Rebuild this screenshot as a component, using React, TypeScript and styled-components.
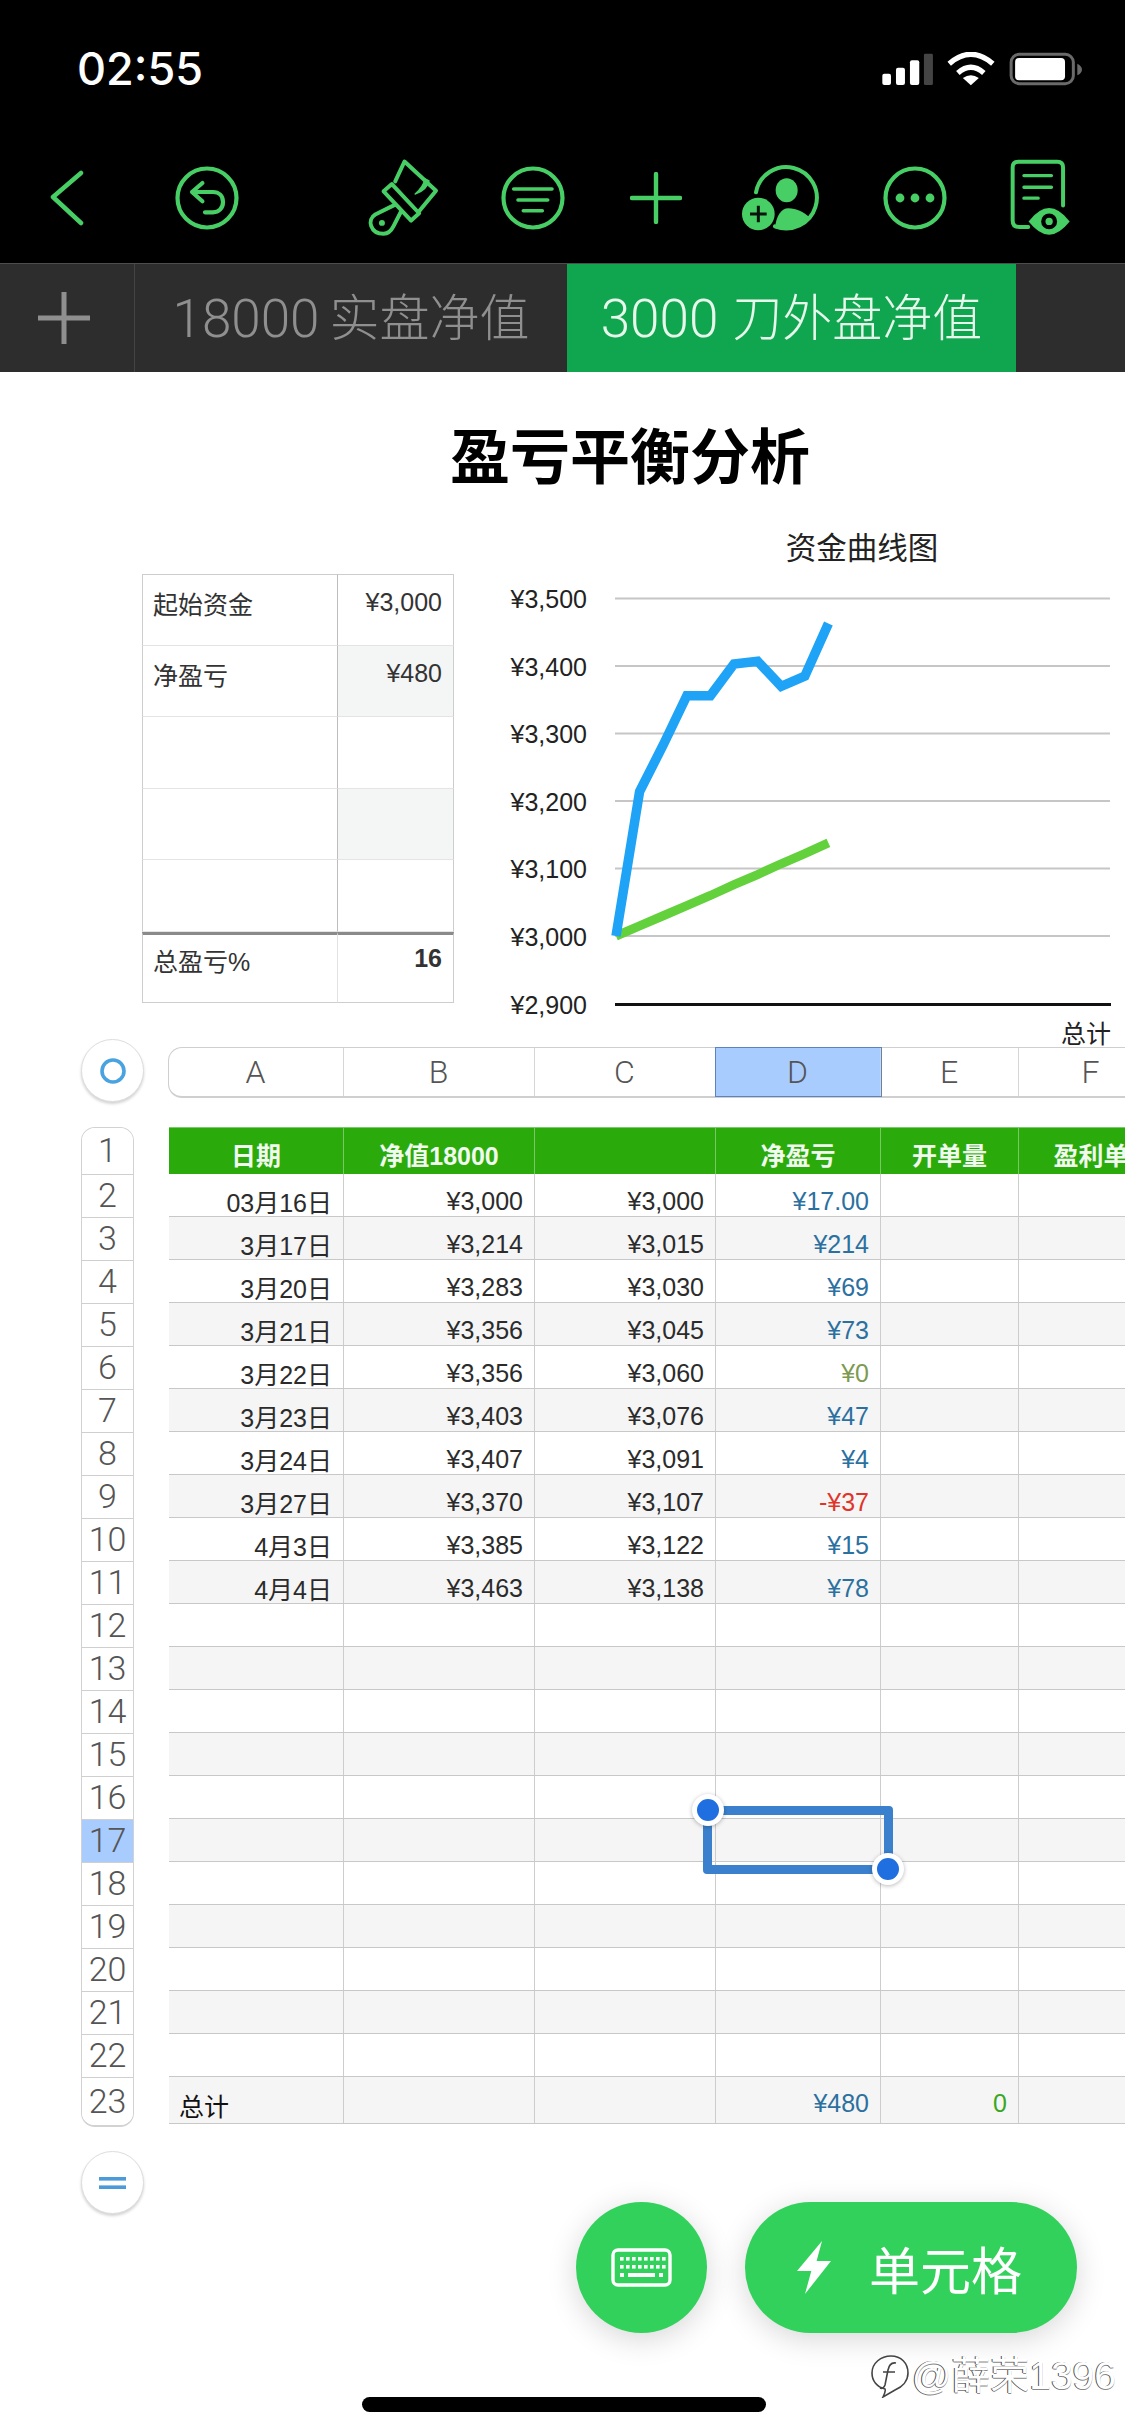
import { FC } from 'react';
import styled, { createGlobalStyle } from 'styled-components';

const SANS = `"Liberation Sans", "Noto Sans CJK SC", sans-serif`;
const LIGHT = `Roboto, "Noto Sans CJK SC", sans-serif`;
const GREEN = '#47cf66';

const COLUMNS = [
	{ name: 'A', width: 175 },
	{ name: 'B', width: 191 },
	{ name: 'C', width: 181 },
	{ name: 'D', width: 165 },
	{ name: 'E', width: 138 },
	{ name: 'F', width: 145 },
];
const TRACKS = COLUMNS.map((c) => `${c.width}px`).join(' ');

type Tone = 'plain' | 'blue' | 'olive' | 'red' | 'green' | 'black';

const ROWS: { date: string; net: string; base: string; pnl: string; tone: Tone }[] = [
	{ date: '03月16日', net: '¥3,000', base: '¥3,000', pnl: '¥17.00', tone: 'blue' },
	{ date: '3月17日', net: '¥3,214', base: '¥3,015', pnl: '¥214', tone: 'blue' },
	{ date: '3月20日', net: '¥3,283', base: '¥3,030', pnl: '¥69', tone: 'blue' },
	{ date: '3月21日', net: '¥3,356', base: '¥3,045', pnl: '¥73', tone: 'blue' },
	{ date: '3月22日', net: '¥3,356', base: '¥3,060', pnl: '¥0', tone: 'olive' },
	{ date: '3月23日', net: '¥3,403', base: '¥3,076', pnl: '¥47', tone: 'blue' },
	{ date: '3月24日', net: '¥3,407', base: '¥3,091', pnl: '¥4', tone: 'blue' },
	{ date: '3月27日', net: '¥3,370', base: '¥3,107', pnl: '-¥37', tone: 'red' },
	{ date: '4月3日', net: '¥3,385', base: '¥3,122', pnl: '¥15', tone: 'blue' },
	{ date: '4月4日', net: '¥3,463', base: '¥3,138', pnl: '¥78', tone: 'blue' },
];

const TONES: Record<Tone, string> = {
	plain: '#2b2b2b',
	blue: '#2c709f',
	olive: '#7d9a52',
	red: '#e0342a',
	green: '#3aa81e',
	black: '#111',
};

const GlobalStyle = createGlobalStyle`
	html, body {
		margin: 0;
		padding: 0;
		background: #fff;
	}
`;

const Page = styled.div`
	position: relative;
	width: 1125px;
	height: 2436px;
	overflow: hidden;
	background: #fff;
	font-family: ${SANS};
`;

const StatusBar = styled.div`
	display: flex;
	justify-content: space-between;
	align-items: flex-start;
	box-sizing: border-box;
	height: 130px;
	padding: 52px 42px 0 77px;
	background: #000;
`;

const Clock = styled.span`
	font-family: Inter, sans-serif;
	font-weight: 500;
	font-size: 45px;
	line-height: 33px;
	color: #fff;
`;

const Toolbar = styled.div`
	display: flex;
	align-items: center;
	box-sizing: border-box;
	height: 133px;
	padding: 3px 0 0 50px;
	background: #000;
`;

const ToolIcon = styled.svg<{ $gap?: number }>`
	display: block;
	flex: none;
	margin-left: ${(p) => p.$gap ?? 0}px;
	fill: none;
	stroke: ${GREEN};
	stroke-linecap: round;
	stroke-linejoin: round;
`;

const TabBar = styled.div`
	display: flex;
	height: 109px;
	box-sizing: border-box;
	border-top: 1px solid #4d4d4d;
	background: #2d2d2e;
`;

const AddSheet = styled.div`
	display: flex;
	align-items: center;
	justify-content: center;
	width: 135px;
	box-sizing: border-box;
	padding: 0 6px 0 0;
	border-right: 1px solid #434343;
`;

const SheetTab = styled.div<{ $active?: boolean }>`
	display: flex;
	align-items: center;
	justify-content: center;
	gap: ${(p) => (p.$active ? 14 : 10)}px;
	width: ${(p) => (p.$active ? 449 : 432)}px;
	padding-top: 2px;
	box-sizing: border-box;
	background: ${(p) => (p.$active ? '#10a64f' : 'transparent')};
	color: ${(p) => (p.$active ? '#e8f7ec' : '#8f8f8f')};
	font-family: ${LIGHT};
	font-weight: 300;
	font-size: 50px;
	line-height: 60px;
`;

const TabNumber = styled.span`
	font-size: 53px;
`;

const Title = styled.h1`
	margin: 0;
	padding: 57px 0 0 135px;
	text-align: center;
	font-family: ${SANS};
	font-weight: 700;
	font-size: 60px;
	line-height: 60px;
	color: #000;
`;

const Dashboard = styled.section`
	display: flex;
	align-items: flex-start;
	height: 514px;
	margin-top: 36px;
	padding-left: 142px;
`;

const MiniTable = styled.div`
	display: grid;
	grid-template-columns: 196px 116px;
	grid-auto-rows: 71.5px;
	flex: none;
	margin-top: 49px;
`;

const MiniLabel = styled.div<{ $total?: boolean }>`
	box-sizing: border-box;
	padding: ${(p) => (p.$total ? 12 : 15)}px 10px 0;
	font-size: 25px;
	line-height: 30px;
	color: #333;
	border-left: 1.5px solid #cdcdcd;
	border-right: 1.5px solid ${(p) => (p.$total ? '#e2e2e2' : '#bdbdbd')};
	border-bottom: 1.5px solid ${(p) => (p.$total ? '#cdcdcd' : '#e4e4e4')};
	border-top: ${(p) => (p.$total ? '3px solid #8a8a8a' : 'none')};

	&:first-child {
		border-top: 1.5px solid #cdcdcd;
	}
`;

const MiniValue = styled.div<{ $shaded?: boolean; $total?: boolean; $first?: boolean }>`
	box-sizing: border-box;
	padding: ${(p) => (p.$total ? 8 : 12)}px 11px 0 0;
	text-align: right;
	font-size: 25px;
	line-height: 30px;
	font-weight: ${(p) => (p.$total ? 700 : 400)};
	color: #333;
	background: ${(p) => (p.$shaded ? '#f4f5f5' : 'transparent')};
	border-right: 1.5px solid #cdcdcd;
	border-bottom: 1.5px solid ${(p) => (p.$total ? '#cdcdcd' : '#e4e4e4')};
	border-top: ${(p) => (p.$total ? '3px solid #8a8a8a' : p.$first ? '1.5px solid #cdcdcd' : 'none')};
`;

const Chart = styled.svg`
	display: block;
	flex: none;
	margin-left: 46px;
	overflow: visible;
	font-family: ${SANS};
`;

const Strip = styled.div`
	display: flex;
	align-items: flex-start;
	height: 63px;
	padding-left: 81px;
`;

const RoundButton = styled.div`
	display: flex;
	align-items: center;
	justify-content: center;
	flex: none;
	width: 63px;
	height: 63px;
	box-sizing: border-box;
	border: 1px solid #dedede;
	border-radius: 50%;
	background: #fff;
	box-shadow: 0 2px 3px rgba(0, 0, 0, 0.18);
`;

const ColumnBar = styled.div`
	display: grid;
	grid-template-columns: ${TRACKS};
	flex: none;
	height: 51px;
	margin: 8px 0 0 23.5px;
	box-sizing: border-box;
	border: 1.5px solid #cfcfcf;
	border-right: none;
	border-bottom-width: 2px;
	border-radius: 14px 0 0 14px;
`;

const ColumnHead = styled.div<{ $selected?: boolean }>`
	display: flex;
	align-items: center;
	justify-content: center;
	box-sizing: border-box;
	border-right: 1px solid #d6d6d6;
	font-family: ${LIGHT};
	font-weight: 300;
	font-size: 32px;
	color: #555;
	background: ${(p) => (p.$selected ? '#a9ccff' : 'transparent')};
	outline: ${(p) => (p.$selected ? '1.5px solid #5b83bd' : 'none')};
`;

const SheetArea = styled.div`
	display: flex;
	align-items: flex-start;
	gap: 35px;
	margin-top: 25px;
	padding-left: 81px;
`;

const RowNumbers = styled.div`
	flex: none;
	width: 53px;
	box-sizing: border-box;
	border: 1.5px solid #d2d2d2;
	border-bottom-width: 2px;
	border-radius: 14px;
	overflow: hidden;
`;

const RowNumber = styled.div<{ $tall?: boolean; $selected?: boolean }>`
	display: flex;
	align-items: center;
	justify-content: center;
	height: ${(p) => (p.$tall ? 47 : 43)}px;
	box-sizing: border-box;
	padding-bottom: 2px;
	border-bottom: 1px solid #cfcfcf;
	font-family: ${LIGHT};
	font-weight: 300;
	font-size: 34px;
	color: #555;
	background: ${(p) => (p.$selected ? '#a9ccff' : '#fff')};

	&:last-child {
		border-bottom: none;
	}
`;

const TableBody = styled.div`
	position: relative;
	flex: none;
`;

const HeaderRow = styled.div`
	display: grid;
	grid-template-columns: ${TRACKS};
	height: 47px;
	border-top: 1px solid #7acb66;
	box-sizing: border-box;
	background: #2bab0b;
`;

const HeaderCell = styled.div`
	display: flex;
	align-items: flex-end;
	justify-content: center;
	box-sizing: border-box;
	padding-bottom: 3px;
	border-right: 1px solid #78c964;
	font-weight: 700;
	font-size: 25px;
	line-height: 30px;
	color: #f1faee;
`;

const DataRow = styled.div<{ $shaded?: boolean; $tall?: boolean }>`
	display: grid;
	grid-template-columns: ${TRACKS};
	height: ${(p) => (p.$tall ? 47 : 43)}px;
	box-sizing: border-box;
	border-bottom: 1.5px solid #c8c8c8;
	background: ${(p) => (p.$shaded ? '#f5f5f5' : '#fff')};
`;

const Cell = styled.div<{ $tone?: Tone; $left?: boolean; $date?: boolean; $lift?: number }>`
	display: flex;
	align-items: flex-end;
	justify-content: ${(p) => (p.$left ? 'flex-start' : 'flex-end')};
	box-sizing: border-box;
	padding: 0 11px ${(p) => p.$lift ?? 0}px 10px;
	border-right: 1px solid #cdcdcd;
	font-size: 25px;
	line-height: ${(p) => (p.$date ? 25 : 30)}px;
	color: ${(p) => TONES[p.$tone ?? 'plain']};
`;

const Selection = styled.div`
	position: absolute;
	left: 534px;
	top: 679px;
	width: 190px;
	height: 68px;
	box-sizing: border-box;
	border: 9px solid #3a80cc;
	border-radius: 4px;
`;

const Handle = styled.div<{ $end?: boolean }>`
	position: absolute;
	${(p) => (p.$end ? 'right: -20px; bottom: -20px;' : 'left: -20px; top: -21px;')}
	width: 32px;
	height: 32px;
	box-sizing: border-box;
	border: 5.5px solid #fff;
	border-radius: 50%;
	background: #1f6fe0;
	box-shadow: 0 1px 4px rgba(0, 0, 0, 0.28);
`;

const FormulaButton = styled(RoundButton)`
	margin: 24px 0 0 81px;
`;

const FloatingActions = styled.div`
	position: absolute;
	right: 48px;
	bottom: 103px;
	display: flex;
	gap: 38px;
`;

const KeyboardButton = styled.div`
	display: flex;
	align-items: center;
	justify-content: center;
	width: 131px;
	height: 131px;
	border-radius: 50%;
	background: #32d15c;
	box-shadow: 0 6px 30px rgba(0, 0, 0, 0.16);
`;

const CellButton = styled.div`
	display: flex;
	align-items: center;
	gap: 38px;
	width: 332px;
	height: 131px;
	box-sizing: border-box;
	padding-left: 52px;
	border-radius: 66px;
	background: #32d15c;
	box-shadow: 0 6px 30px rgba(0, 0, 0, 0.16);
	color: #fff;
	font-family: "Noto Sans CJK SC", sans-serif;
	font-size: 51px;
	line-height: 60px;
`;

const Watermark = styled.div`
	position: absolute;
	right: 9px;
	bottom: 38px;
	display: flex;
	align-items: center;
	gap: 3px;
	color: #fff;
	font-size: 39px;
	line-height: 44px;
	text-shadow: -1px 0 0 #4a4a4a, 0 1px 0 #8a8a8a;
`;

const HomeBar = styled.div`
	position: absolute;
	left: 362px;
	bottom: 24px;
	width: 404px;
	height: 15px;
	border-radius: 8px;
	background: #000;
`;

const StatusIcons: FC = () => (
	<svg width={203} height={34} viewBox="60 35 610 102" style={{ display: 'block' }}>
		<g fill="#fff">
			<rect x={67} y={100} width={26} height={34} rx={6} />
			<rect x={108} y={82} width={27} height={52} rx={6} />
			<rect x={150} y={60} width={28} height={74} rx={6} />
		</g>
		<rect x={192} y={40} width={27} height={94} rx={4} fill="#444" />
		<g fill="none" stroke="#fff" strokeWidth={16}>
			<path d="M268 70Q333 14 399 70" />
			<path d="M294 98Q333 64 372 98" />
		</g>
		<path d="M333 135L309 113Q333 96 357 113Z" fill="#fff" />
		<rect x={454} y={42} width={187} height={88} rx={24} fill="none" stroke="#6a6a6a" strokeWidth={9} />
		<rect x={466} y={53} width={150} height={67} rx={12} fill="#fff" />
		<path d="M653 70Q667 78 667 88Q667 98 653 105Z" fill="#6a6a6a" />
	</svg>
);

const Tools: FC = () => (
	<Toolbar>
		<ToolIcon width={35} height={60} viewBox="50 168 35 60" strokeWidth={4.5}>
			<path d="M81 173L53 197L81 223" />
		</ToolIcon>
		<ToolIcon $gap={90} width={64} height={64} viewBox="0 0 64 64" strokeWidth={4.2}>
			<circle cx={32} cy={32} r={29.5} />
			<path d="M27.4 17L17 26L27.4 35.3M17 26H38C44 26 48 30 48 36C48 42 44 46.3 38 46.3H30" />
		</ToolIcon>
		<ToolIcon $gap={128} width={73} height={80} viewBox="75 30 220 240" strokeWidth={12}>
			<path d="M150 108L125 130L208 218L232 196Z" />
			<path d="M160 100L188 40L283 128L232 190" />
			<path d="M262 98Q256 126 220 138Q244 118 250 92Z" fill={GREEN} strokeWidth={4} />
			<path d="M160 170L100 200C74 215 85 258 125 258C140 258 150 245 155 235L178 190" />
			<circle cx={120} cy={225} r={9} fill={GREEN} stroke="none" />
		</ToolIcon>
		<ToolIcon $gap={61} width={64} height={64} viewBox="0 0 64 64" strokeWidth={4.2}>
			<circle cx={32} cy={32} r={29.5} />
			<path d="M12.7 23H51M17 34H46.7M22.3 44.7H41.3" strokeWidth={3.6} />
		</ToolIcon>
		<ToolIcon $gap={65} width={52} height={52} viewBox="0 0 52 52" strokeWidth={4.4}>
			<path d="M26 2V50M2 26H50" />
		</ToolIcon>
		<ToolIcon $gap={58} width={80} height={68} viewBox="60 45 240 204" strokeWidth={12}>
			<path d="M108 130A92 92 0 1 1 165 232" />
			<ellipse cx={200} cy={124} rx={33} ry={36} fill={GREEN} stroke="none" />
			<path d="M165 238C168 200 185 178 205 178C230 178 250 190 268 204C245 228 210 244 165 238Z" fill={GREEN} stroke="none" />
			<circle cx={115} cy={195} r={49} fill={GREEN} stroke="none" />
			<path d="M115 170V220M90 195H140" stroke="#08130a" strokeWidth={9} strokeLinecap="butt" />
		</ToolIcon>
		<ToolIcon $gap={63} width={64} height={64} viewBox="0 0 64 64" strokeWidth={4.2}>
			<circle cx={32} cy={32} r={29.5} />
			<g fill={GREEN} stroke="none">
				<circle cx={17} cy={32} r={4.4} />
				<circle cx={32} cy={32} r={4.4} />
				<circle cx={47} cy={32} r={4.4} />
			</g>
		</ToolIcon>
		<ToolIcon $gap={63} width={63} height={78} viewBox="870 30 190 235" strokeWidth={12}>
			<path d="M1030 170V55Q1030 38 1013 38H895Q878 38 878 55V215Q878 235 898 235H925" />
			<path d="M912 80H995M912 115H995M912 148H955" strokeWidth={10} />
			<path d="M926 218Q958 178 988 178Q1018 178 1050 218Q1018 258 988 258Q958 258 926 218Z" fill={GREEN} stroke="none" />
			<circle cx={988} cy={218} r={24} fill="#000" stroke="none" />
			<circle cx={988} cy={218} r={11} fill={GREEN} stroke="none" />
		</ToolIcon>
	</Toolbar>
);

const Tabs: FC = () => (
	<TabBar>
		<AddSheet>
			<svg width={52} height={52} viewBox="0 0 52 52" fill="none" stroke="#8f8f8f" strokeWidth={5}>
				<path d="M26 0V52M0 26H52" />
			</svg>
		</AddSheet>
		<SheetTab>
			<TabNumber>18000</TabNumber>
			<span>实盘净值</span>
		</SheetTab>
		<SheetTab $active>
			<TabNumber>3000</TabNumber>
			<span>刀外盘净值</span>
		</SheetTab>
	</TabBar>
);

const VALUES = [3000, 3214, 3283, 3356, 3356, 3403, 3407, 3370, 3385, 3463];
const BASELINE = [3000, 3015, 3030, 3045, 3060, 3076, 3091, 3107, 3122, 3138];
const LABELS = ['¥3,500', '¥3,400', '¥3,300', '¥3,200', '¥3,100', '¥3,000'];

const polyline = (series: number[]) =>
	series.map((v, i) => `${616 + i * 23.6},${936 - (v - 3000) * 0.675}`).join(' ');

const CurveChart: FC = () => (
	<Chart width={625} height={522} viewBox="500 525 625 522">
		<text x={862} y={559} textAnchor="middle" fontSize={30.5} fill="#222" fontFamily={SANS}>
			资金曲线图
		</text>
		{LABELS.map((label, i) => {
			const y = 598.5 + i * 67.5;
			return (
				<g key={label}>
					<line x1={615} x2={1110} y1={y} y2={y} stroke="#c6c6c6" strokeWidth={2} />
					<text x={587} y={y + 9.5} textAnchor="end" fontSize={25} fill="#222">
						{label}
					</text>
				</g>
			);
		})}
		<line x1={615} x2={1111} y1={1004.5} y2={1004.5} stroke="#111" strokeWidth={3} />
		<text x={587} y={1014} textAnchor="end" fontSize={25} fill="#222">
			¥2,900
		</text>
		<text x={1111} y={1043} textAnchor="end" fontSize={25} fill="#222" fontFamily={SANS}>
			总计
		</text>
		<polyline points={polyline(BASELINE)} fill="none" stroke="#62d13c" strokeWidth={9} />
		<polyline points={polyline(VALUES)} fill="none" stroke="#1ea3f6" strokeWidth={9.5} />
	</Chart>
);

const Sheet: FC = () => {
	const numbers = Array.from({ length: 23 }, (_, i) => i + 1);

	return (
		<>
			<Strip>
				<RoundButton>
					<svg width={26} height={26} viewBox="0 0 26 26" fill="none" stroke="#4aa3e0" strokeWidth={3.6}>
						<circle cx={13} cy={13} r={11} />
					</svg>
				</RoundButton>
				<ColumnBar>
					{COLUMNS.map((c) => (
						<ColumnHead key={c.name} $selected={c.name === 'D'}>
							{c.name}
						</ColumnHead>
					))}
				</ColumnBar>
			</Strip>
			<SheetArea>
				<RowNumbers>
					{numbers.map((n) => (
						<RowNumber key={n} $tall={n === 1 || n === 23} $selected={n === 17}>
							{n}
						</RowNumber>
					))}
				</RowNumbers>
				<TableBody>
					<HeaderRow>
						<HeaderCell>日期</HeaderCell>
						<HeaderCell>净值18000</HeaderCell>
						<HeaderCell />
						<HeaderCell>净盈亏</HeaderCell>
						<HeaderCell>开单量</HeaderCell>
						<HeaderCell>盈利单</HeaderCell>
					</HeaderRow>
					{numbers.slice(1, 22).map((n) => {
						const row = ROWS[n - 2];
						return (
							<DataRow key={n} $shaded={n % 2 === 1}>
								<Cell $date>{row?.date}</Cell>
								<Cell>{row?.net}</Cell>
								<Cell>{row?.base}</Cell>
								<Cell $tone={row?.tone}>{row?.pnl}</Cell>
								<Cell />
								<Cell />
							</DataRow>
						);
					})}
					<DataRow $shaded $tall>
						<Cell $left $tone="black" $lift={1}>
							总计
						</Cell>
						<Cell />
						<Cell />
						<Cell $tone="blue" $lift={5}>
							¥480
						</Cell>
						<Cell $tone="green" $lift={5}>
							0
						</Cell>
						<Cell />
					</DataRow>
					<Selection>
						<Handle />
						<Handle $end />
					</Selection>
				</TableBody>
			</SheetArea>
			<FormulaButton>
				<svg width={27} height={12} viewBox="0 0 27 12" fill="#4a9bd8">
					<rect width={27} height={3.6} y={0} />
					<rect width={27} height={3.6} y={8.4} />
				</svg>
			</FormulaButton>
		</>
	);
};

const KEY_ROWS = [12, 20];

const KeyboardIcon: FC = () => (
	<svg width={61} height={39} viewBox="0 0 61 39">
		<rect x={2} y={2} width={57} height={35} rx={5} fill="none" stroke="#fff" strokeWidth={3.4} />
		<g fill="#fff">
			{KEY_ROWS.map((y) =>
				[9, 15, 21, 27, 33, 39, 45, 51].map((x) => <rect key={`${x}-${y}`} x={x} y={y - 3} width={3.6} height={3.6} />),
			)}
			<rect x={9} y={25} width={4} height={4} />
			<rect x={17} y={25} width={27} height={4} />
			<rect x={48} y={25} width={4} height={4} />
		</g>
	</svg>
);

const App: FC = () => (
	<Page>
		<GlobalStyle />
		<StatusBar>
			<Clock>02:55</Clock>
			<StatusIcons />
		</StatusBar>
		<Tools />
		<Tabs />
		<Title>盈亏平衡分析</Title>
		<Dashboard>
			<MiniTable>
				<MiniLabel>起始资金</MiniLabel>
				<MiniValue $first>¥3,000</MiniValue>
				<MiniLabel>净盈亏</MiniLabel>
				<MiniValue $shaded>¥480</MiniValue>
				<MiniLabel />
				<MiniValue />
				<MiniLabel />
				<MiniValue $shaded />
				<MiniLabel />
				<MiniValue />
				<MiniLabel $total>总盈亏%</MiniLabel>
				<MiniValue $total>16</MiniValue>
			</MiniTable>
			<CurveChart />
		</Dashboard>
		<Sheet />
		<FloatingActions>
			<KeyboardButton>
				<KeyboardIcon />
			</KeyboardButton>
			<CellButton>
				<svg width={34} height={54} viewBox="0 0 34 54" fill="#fff">
					<path d="M25 0L0 30H14.3L8 53L34 20H19.6Z" />
				</svg>
				<span>单元格</span>
			</CellButton>
		</FloatingActions>
		<Watermark>
			<svg width={38} height={44} viewBox="0 0 38 44" fill="none" stroke="#444" strokeWidth={1.6}>
				<path d="M20 2C30 2 37 9 37 19C37 27 31 33 24 36L12 43C14 39 15 37 14 35C6 33 1 27 1 19C1 9 10 2 20 2Z" />
				<path d="M25 9C20 8 18 11 17 16L14 31C13 34 11 35 9 34M12 18H24" />
			</svg>
			<span>@薛荣1396</span>
		</Watermark>
		<HomeBar />
	</Page>
);

export default App;
